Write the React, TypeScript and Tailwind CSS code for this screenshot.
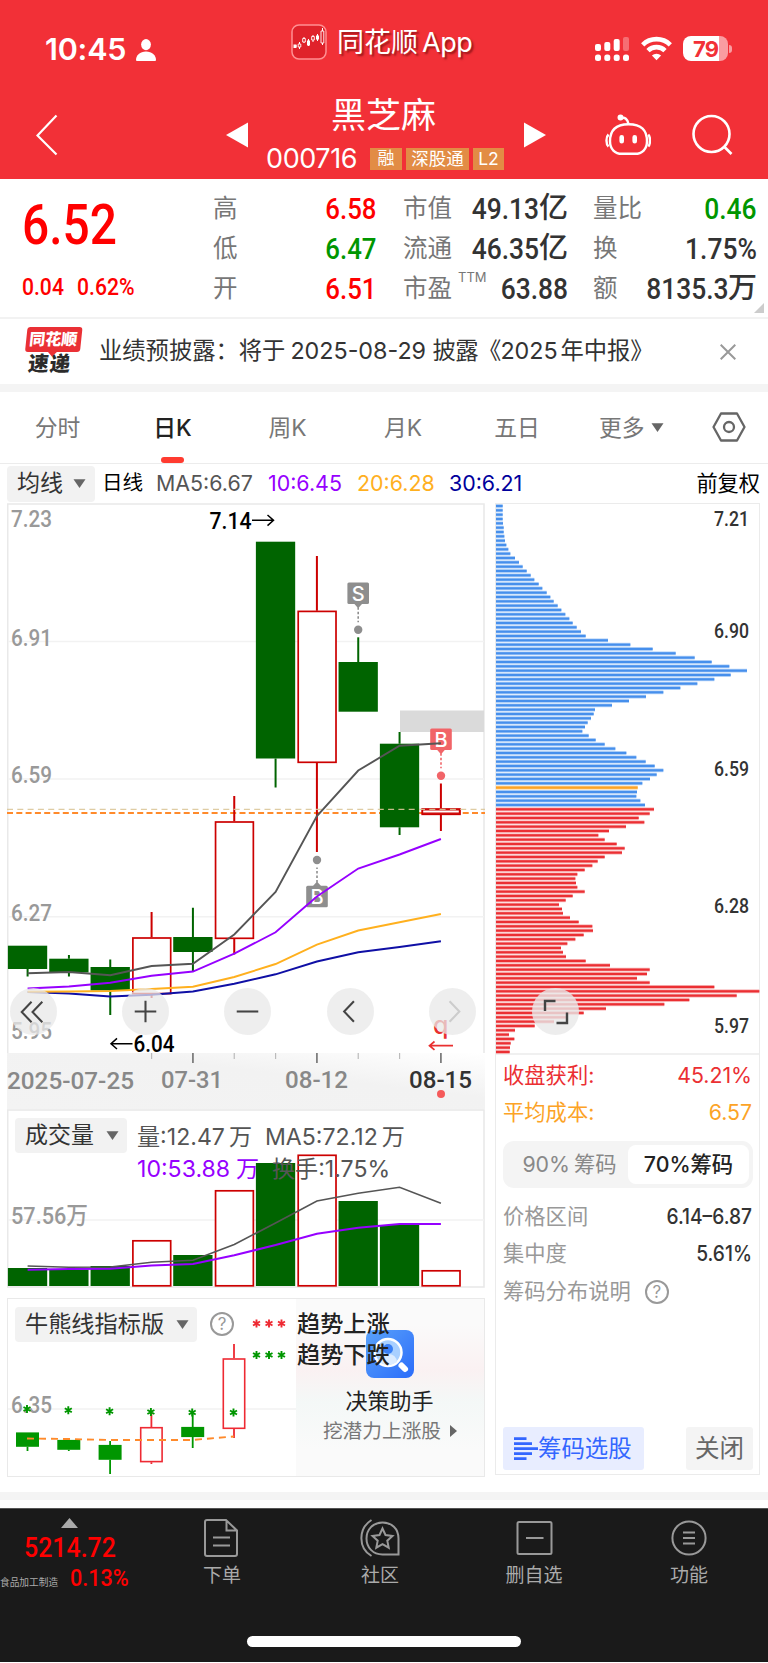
import type { ReactNode } from 'react';
import { clsx } from 'clsx';

const GREEN = '#006400';
const RED = '#cc0000';
const PITCH = 41.33;
const cx = (i: number) => 27.6 + i * PITCH;

type Candle = { up?: boolean; top: number; bottom: number; high: number; low: number };

const candles: Candle[] = [
    { top: 945.7, bottom: 969, high: 945.7, low: 976.5 },
    { top: 958.7, bottom: 972.5, high: 955, low: 976.5 },
    { top: 967, bottom: 990.5, high: 959.5, low: 1015 },
    { up: true, top: 937.3, bottom: 994.3, high: 912, low: 998 },
    { top: 937, bottom: 952, high: 907.7, low: 971 },
    { up: true, top: 821.3, bottom: 939, high: 796, low: 954.5 },
    { top: 541.7, bottom: 758.5, high: 541.7, low: 787.5 },
    { up: true, top: 610.7, bottom: 763, high: 556, low: 852 },
    { top: 662, bottom: 711.7, high: 637.3, low: 711.7 },
    { top: 743.7, bottom: 827.3, high: 732, low: 835 },
    { up: true, top: 808.3, bottom: 815, high: 783.5, low: 831 },
];

const averages = [
    { color: '#0f0fa5', ys: [992, 993.5, 996.5, 994.8, 991.5, 983.7, 974.3, 961.5, 952.3, 947, 941.3] },
    { color: '#ffb01e', ys: [991.7, 991.5, 991, 989, 986.7, 977, 964, 944.7, 930.5, 922.3, 914] },
    { color: '#9600ff', ys: [988.5, 986.5, 982.7, 975.7, 971.5, 953.7, 932.3, 896.5, 868.5, 854.5, 839] },
    { color: '#555', ys: [973.2, 972, 975.2, 966, 963.7, 934.5, 892, 816, 770.5, 745.8, 743.3] },
];

const volumes = [1268, 1269.5, 1266, 1240, 1255, 1190, 1163, 1154.5, 1201, 1225, 1270];
const volMa5 = [1266, 1267.3, 1267, 1262.3, 1260.3, 1244.5, 1223, 1201, 1193.3, 1187.3, 1203.3];
const volMa10 = [1269.7, 1269, 1268.7, 1265.5, 1264, 1255.3, 1245, 1233.7, 1227.7, 1224, 1224];

// chip distribution, one bar per price step from high to low
const chipsAbove = [
    38, 38, 38, 38, 39, 41, 41, 43, 45, 49, 55, 61, 75, 87, 98, 110, 122, 133, 146, 157, 170, 181, 191, 203, 214, 226,
    238, 248, 260, 273, 287, 354, 421, 488, 557, 614, 665, 718, 771, 722, 673, 622, 571, 520, 468, 417, 366, 315, 311,
    303, 293, 285, 277, 296, 317, 344, 376, 409, 439, 467, 494, 520, 500, 480, 457, 443, 441, 439, 451, 465,
];
const chipsBelow = [
    492, 479, 446, 463, 408, 357, 325, 344, 380, 404, 396, 344, 323, 307, 284, 262, 256, 258, 262, 284, 248, 227, 207,
    216, 219, 240, 266, 307, 309, 281, 256, 232, 213, 219, 228, 287, 360, 479, 471, 441, 479, 673, 808, 740, 598, 523,
    348, 281, 230, 192, 134, 75, 57, 73, 62, 60, 59,
];
const AVG_COST_INDEX = 65;

const toPoints = (ys: number[]) => ys.map((y, i) => `${cx(i)},${y}`).join(' ');

type LabelProps = { x: number; y: number; w: number; size?: number; fill?: string; weight?: number; children: ReactNode };

const Label = ({ x, y, w, size = 24, fill = '#999', weight = 500, children }: LabelProps) => (
    <text
        x={x}
        y={y}
        textLength={w}
        lengthAdjust="spacingAndGlyphs"
        fontSize={size}
        fontWeight={weight}
        fill={fill}
        fontFamily='Roboto, "Noto Sans CJK SC", sans-serif'
    >
        {children}
    </text>
);

const Caret = ({ className }: { className?: string }) => (
    <svg width="13" height="9" viewBox="0 0 13 9" className={className}>
        <path d="M.5 .3h12L6.5 9z" fill="currentColor" />
    </svg>
);

const Help = ({ className }: { className?: string }) => (
    <span
        className={clsx(
            'flex h-6 w-6 items-center justify-center rounded-full border-2 border-[#999] text-[17px] leading-none text-[#999]',
            className,
        )}
    >
        ?
    </span>
);

const StatusBar = () => (
    <div className="flex h-[88px] text-white">
        <div className="flex w-[291px] gap-[10px] pt-[33px] pl-[45px]">
            <span className="text-[30.500px] leading-8 font-semibold tracking-[-0.200px]">10:45</span>
            <svg width="20" height="22" viewBox="0 0 20 22" className="mt-[6px]" fill="#fff">
                <ellipse cx="10" cy="5.6" rx="4.9" ry="5.6" />
                <path d="M0 21c0-5 4-8.600 10-8.600S20 16 20 21q0 1-1 1H1q-1 0-1-1z" />
            </svg>
        </div>
        <div className="flex gap-[10px] pt-6">
            <svg width="36" height="36" viewBox="0 0 36 36">
                <rect x="1" y="1" width="34" height="34" rx="7" fill="#e0222b" stroke="#ff8f92" strokeWidth="1.500" />
                <path d="M3 22h3M8.500 18v7M13 13v6M17.500 15v7M22 11v7M26.500 10v7M31.500 4v17" stroke="#fff" strokeWidth="1" />
                <path d="M2.500 20.500h3v3.500h-3zM16 16.500h3v5h-3zM25 11.500h3v4h-3z" fill="#fff" />
                <path d="M7.200 20h2.600v3H7.200zM11.700 14.500h2.600V18h-2.600zM20.700 12.500h2.600v3.500h-2.600zM30 7h2.800v12H30z" fill="#e0222b" stroke="#fff" strokeWidth=".9" />
            </svg>
            <span className="pt-[1px] text-[27px] leading-9 whitespace-nowrap [text-shadow:2px_2px_2px_rgba(80,0,0,.55)]">
                同花顺<span className="ml-[4px] tracking-[-0.5px]">App</span>
            </span>
        </div>
        <div className="ml-auto flex gap-[11px] pt-9 pr-[36px]">
            <svg width="35" height="26" viewBox="0 0 35 26" fill="#fff">
                <rect x="0" y="8" width="6" height="7" rx="2" />
                <rect x="9.300" y="6" width="6" height="9" rx="2" />
                <rect x="18.700" y="3" width="6" height="12" rx="2" />
                <rect x="28" y="1" width="6" height="14" rx="2" opacity=".3" />
                {[0, 9.3, 18.7, 28].map((x) => (
                    <rect key={x} x={x} y="18.500" width="6" height="6.500" rx="2.500" />
                ))}
            </svg>
            <svg width="31" height="25" viewBox="0 0 31 25" fill="none" stroke="#fff" strokeWidth="4.600">
                <path d="M1.700 8.800a19.500 19.500 0 0 1 27.600 0" />
                <path d="M7 14.700a12 12 0 0 1 17 0" />
                <path d="M15.500 24.300l-4.600-4.700a6.500 6.500 0 0 1 9.200 0z" fill="#fff" stroke="none" />
            </svg>
            <div className="flex h-[25px] items-center">
                <div className="flex h-[25px] w-[45px] items-center justify-center rounded-[8px] bg-[linear-gradient(90deg,#fff_80%,#f99da1_80%)] text-[22px] leading-none font-bold tracking-[-1px] text-[#f23037]">
                    79
                </div>
                <div className="ml-[1px] h-2 w-[3px] rounded-r-full bg-[#f99da1]" />
            </div>
        </div>
    </div>
);

const TitleBar = () => (
    <div className="flex h-[91px] text-white">
        <svg width="22" height="42" viewBox="0 0 22 42" className="mt-[26px] ml-[36px]" fill="none" stroke="#fff" strokeWidth="2.200">
            <path d="M20.500 1.500L1.500 21.500l19 19" />
        </svg>
        <svg width="22" height="26" viewBox="0 0 22 26" className="mt-[34px] ml-[168px]">
            <path d="M22 .5v25L0 13z" fill="#fff" />
        </svg>
        <div className="flex w-[276px] flex-col items-center">
            <div className="mt-[7px] mr-[5px] text-[35px] leading-[40px]">黑芝麻</div>
            <div className="mt-[12px] mr-[2px] flex items-center gap-[4px]">
                <span className="mr-[6px] w-[94px] text-[27px] leading-6 tracking-[-0.400px]">000716</span>
                <span className="h-[22px] w-[32px] bg-[#e28c45] text-center text-[17px] leading-[21px]">融</span>
                <span className="h-[22px] w-[63px] bg-[#e28c45] text-center text-[17.500px] leading-[21px]">深股通</span>
                <span className="h-[22px] w-[31px] bg-[#e28c45] text-center text-[17.500px] leading-[22px]">L2</span>
            </div>
        </div>
        <svg width="22" height="26" viewBox="0 0 22 26" className="mt-[34px]">
            <path d="M0 .5v25L22 13z" fill="#fff" />
        </svg>
        <svg width="46" height="44" viewBox="0 0 46 44" className="mt-[26px] ml-[59px]" fill="none" stroke="#fff" strokeWidth="2.400">
            <path d="M16 4q6-1.500 7.500 6" />
            <circle cx="15.500" cy="3.500" r="1.800" fill="#fff" />
            <path d="M23.500 10.300c-13 0-18.500 6-18.500 17 0 8 5 12.500 12 12.500h13c7 0 12-4.500 12-12.500 0-11-5.500-17-18.500-17z" />
            <path d="M3.500 20.500c-2.700 2.500-2.700 9.500 0 12M43.300 20.500c2.300 2.500 2.300 9.500 0 12" />
            <path d="M16.700 23.200v4M29.700 23.200v4" strokeWidth="4.600" strokeLinecap="round" />
        </svg>
        <svg width="42" height="42" viewBox="0 0 42 42" className="mt-[26px] ml-[41px]" fill="none" stroke="#fff" strokeWidth="2.600">
            <circle cx="19.500" cy="20" r="18" />
            <path d="M32 32.500l7.500 7.500" />
        </svg>
    </div>
);

const quoteColumns = [
    {
        box: 'w-[164px] ml-[213px]',
        rows: [['高', '6.58', '', 'text-[#f00]'], ['低', '6.47', '', 'text-[#009600]'], ['开', '6.51', '', 'text-[#f00]']],
    },
    {
        box: 'w-[165px] ml-[26px]',
        rows: [['市值', '49.13', '亿', 'text-[#333]'], ['流通', '46.35', '亿', 'text-[#333]'], ['市盈', '63.88', '', 'text-[#333]']],
    },
    {
        box: 'w-[164px] ml-[25px]',
        rows: [['量比', '0.46', '', 'text-[#009600]'], ['换', '1.75%', '', 'text-[#333]'], ['额', '8135.3', '万', 'text-[#333]']],
    },
];

const Quote = () => (
    <section className="relative flex h-[140px] border-b-2 border-[#f2f2f2] pt-[9px]">
        <div className="absolute top-0 left-0 font-[Roboto] text-[#f00]">
            <div className="mt-[18px] ml-[22px] origin-left scale-x-[0.87] text-[55px] leading-[56px] font-medium">6.52</div>
            <div className="mt-[22px] ml-[22px] flex origin-left scale-x-[0.88] gap-[15px] text-[24px] leading-6 font-medium">
                <span>0.04</span>
                <span>0.62%</span>
            </div>
        </div>
        {quoteColumns.map((col) => (
            <div key={col.box} className={col.box}>
                {col.rows.map(([name, value, unit, color]) => (
                    <div key={name} className="flex h-10 items-center justify-between whitespace-nowrap">
                        <span className="flex text-[24.500px] text-[#777]">
                            {name}
                            {name === '市盈' && <sup className="top-[1px] ml-[6px] text-[13px] leading-none">TTM</sup>}
                        </span>
                        <span className={clsx('flex items-center pt-[2px] text-[29px] leading-9 font-medium', color)}>
                            <span className={clsx('origin-right font-[Roboto]', col.box.includes('213') ? 'scale-x-[0.89]' : 'scale-x-[0.91]')}>
                                {value}
                            </span>
                            {unit && <span className="mb-[3px]">{unit}</span>}
                        </span>
                    </div>
                ))}
            </div>
        ))}
        <svg width="10" height="10" className="absolute right-1 bottom-[4px]">
            <path d="M10 0v10H0z" fill="#ccc" />
        </svg>
    </section>
);

const News = () => (
    <section className="flex h-[65px] items-center">
        <div className="ml-[22px] flex w-[60px] -skew-x-6 flex-col items-center">
            <div className="relative h-[25px] w-[55px] rounded-[3px] bg-[#ea3035] text-center text-[16px] leading-[24px] font-black text-white">
                同花顺
                <span className="absolute bottom-[-3px] left-[24px] h-[7px] w-[7px] rotate-45 bg-[#ea3035]" />
            </div>
            <div className="mr-[2px] text-[20.500px] leading-[24px] font-black tracking-[1px] text-[#2b2b2b]">速递</div>
        </div>
        <p className="ml-[17px] flex flex-1 text-[23.300px] whitespace-nowrap text-[#333]">
            <span>业绩预披露：将于</span>
            <span className="ml-[5px] w-[142px]">2025-08-29</span>
            <span className="w-[68px] tracking-[-0.500px]">披露《</span>
            <span className="w-[60px]">2025</span>
            <span>年中报》</span>
        </p>
        <svg width="16" height="16" viewBox="0 0 16 16" className="mr-[32px]" stroke="#999" strokeWidth="2">
            <path d="M.7.700l14.600 14.600M15.300.7L.7 15.300" />
        </svg>
    </section>
);

const tabs = [
    { label: '分时', box: 'w-[115px]' },
    { label: '日K', box: 'w-[115px]', active: true },
    { label: '周K', box: 'w-[115px]' },
    { label: '月K', box: 'w-[116px]' },
    { label: '五日', box: 'w-[112px]' },
];

const Tabs = () => (
    <nav className="flex h-[72px] border-b border-[#ececec] text-[22.800px] text-[#777]">
        {tabs.map((t) => (
            <div key={t.label} className={clsx('flex flex-col items-center justify-between pt-[20px]', t.box, t.active && 'font-medium text-[#222]')}>
                <span className="leading-8">{t.label}</span>
                {t.active && <span className="mr-[1px] h-[6px] w-[23px] rounded-[3px] bg-[#ff3b30]" />}
            </div>
        ))}
        <div className="ml-[26px] flex gap-[6px] pt-[20px]">
            <span className="leading-8">更多</span>
            <Caret className="mt-[11px] text-[#666]" />
        </div>
        <svg width="34" height="30" viewBox="0 0 34 30" className="mt-[20px] ml-[48px]" fill="none" stroke="#666" strokeWidth="2.300">
            <path d="M9 1.500h16L32.500 15 25 28.500H9L1.500 15z" strokeLinejoin="round" />
            <circle cx="17" cy="15" r="5" />
        </svg>
    </nav>
);

const MaBar = () => (
    <div className="flex h-[39px] items-center text-[21.400px] whitespace-nowrap">
        <div className="ml-[7px] flex h-[36px] w-[88px] items-center gap-[10px] rounded-[4px] bg-[#f2f2f2] pl-[10px] text-[23px] text-[#333]">
            均线
            <Caret className="text-[#666]" />
        </div>
        <span className="ml-[7px] w-[54px] text-[20.600px] text-black">日线</span>
        <span className="w-[112px] text-[#555]">MA5:6.67</span>
        <span className="w-[89px] text-[#9600ff]">10:6.45</span>
        <span className="w-[92px] text-[#ffb01e]">20:6.28</span>
        <span className="text-[#00009c]">30:6.21</span>
        <span className="mr-[8px] ml-auto text-[21.200px] text-black">前复权</span>
    </div>
);

type MarkProps = { x: number; y: number; letter: string; color: string; down?: boolean };

// trade marker: lettered badge joined to its dot by a dotted line
const Mark = ({ x, y, letter, color, down }: MarkProps) => {
    const dir = down ? -1 : 1;
    return (
        <g>
            <rect x={x - 10.8} y={y - 10.8} width="21.600" height="21.600" rx="1.500" fill={color} />
            <path d={`M${x - 4} ${y + dir * 10.5}h8l-4 ${dir * 4.5}z`} fill={color} />
            <line x1={x} x2={x} y1={y + dir * 14} y2={y + dir * 29} stroke={color} strokeWidth="1.600" strokeDasharray="2.500 2" />
            <circle cx={x} cy={y + dir * 36.500} r="4.200" fill={color} />
            <text x={x} y={y + 7.5} textAnchor="middle" fontSize="20" fontWeight="500" fill="#fff" fontFamily="Inter, sans-serif">
                {letter}
            </text>
        </g>
    );
};

const controls: { x: string; icon: string; faded?: boolean }[] = [
    { x: 'left-[3px]', icon: 'M22 14L12 24.500 22 35M33 14L23 24.500 33 35' },
    { x: 'left-[115px]', icon: 'M24 13v22M13 24h22' },
    { x: 'left-[217px]', icon: 'M13 24h22' },
    { x: 'left-[320px]', icon: 'M27.500 13.500L17.500 24l10 10.500' },
    { x: 'left-[422px]', icon: 'M21 13.500L31 24 21 34.500', faded: true },
];

const KLine = () => (
    <div className="relative h-[606px]">
        <svg width="479" height="606" viewBox="7 503 479 606" className="block">
            <defs>
                <linearGradient id="axis" x1="0" x2="1" y1="1" y2="0">
                    <stop offset="0" stopColor="#f3f3f3" />
                    <stop offset=".6" stopColor="#f2f2f2" />
                    <stop offset="1" stopColor="#fff" />
                </linearGradient>
            </defs>
            <rect x="7" y="1053" width="478" height="56" fill="url(#axis)" />
            <path d="M7.700 1053V504h476.300v549" fill="none" stroke="#e9e9e9" strokeWidth="1.600" />
            <path d="M8 641.500h476M8 779h476M8 916.700h476" stroke="#f2f2f2" strokeWidth="1.500" />
            <rect x="400" y="710.500" width="84" height="21.500" fill="#dadada" />
            <Label x={11} y={527} w={41}>7.23</Label>
            <Label x={11} y={645.500} w={41}>6.91</Label>
            <Label x={11} y={783} w={41}>6.59</Label>
            <Label x={11} y={920.500} w={41}>6.27</Label>
            <Label x={11} y={1038.500} w={41}>5.95</Label>
            <line x1="7" x2="485" y1="813" y2="813" stroke="#ff8a2b" strokeWidth="2" strokeDasharray="6 3.300" />
            {candles.map((c, i) => {
                const color = c.up ? RED : GREEN;
                return (
                    <g key={i}>
                        <path d={`M${cx(i)} ${c.high}V${c.top}M${cx(i)} ${c.bottom}V${c.low}`} stroke={color} strokeWidth="2" />
                        {c.up ? (
                            <rect x={cx(i) - 18.700} y={c.top + 0.7} width="37.800" height={c.bottom - c.top - 1.4} fill="#fff" stroke={color} strokeWidth="1.700" />
                        ) : (
                            <rect x={cx(i) - 19.700} y={c.top} width="39.300" height={c.bottom - c.top} fill={color} />
                        )}
                    </g>
                );
            })}
            <rect x="422.500" y="809.800" width="37" height="3.400" fill="#fff" stroke={RED} strokeWidth="1.400" />
            <line x1="7" x2="485" y1="809.300" y2="809.300" stroke="#dcc79a" strokeWidth="1.200" strokeDasharray="6 4.300" opacity=".9" />
            <Mark x={358.2} y={593.3} letter="S" color="#8e8e8e" />
            <Mark x={441} y={739.3} letter="B" color="#f16468" />
            <Mark x={317} y={896.5} letter="B" color="#8e8e8e" down />
            {averages.map((a) => (
                <polyline key={a.color} points={toPoints(a.ys)} fill="none" stroke={a.color} strokeWidth="1.900" />
            ))}
            <Label x={209.500} y={529} w={42} fill="#000">7.14</Label>
            <path d="M252 520.300h21.500M267.500 515l6 5.300-6 5.300" fill="none" stroke="#000" strokeWidth="1.500" />
            <Label x={133.500} y={1052.300} w={41} fill="#000">6.04</Label>
            <path d="M132.500 1043.700H111M117 1038.400l-6 5.300 6 5.300" fill="none" stroke="#000" strokeWidth="1.500" />
            <text x="433" y="1033.500" fontSize="25" fontWeight="500" fill="#e93030" fontFamily="Inter, sans-serif">q</text>
            <path d="M453 1045.700h-23M434.500 1041.500l-5 4.200 5 4.200" fill="none" stroke="#e93030" strokeWidth="1.700" />
            {candles.map((_, i) => {
                if (i < 3) return null;
                const major = i === 4 || i === 7 || i === 10;
                return <path key={i} d={`M${cx(i)} 1053v${major ? 10 : 6}`} stroke={major ? '#777' : '#bbb'} strokeWidth={major ? 1.700 : 1.200} />;
            })}
            <Label x={7} y={1088.500} w={127} fill="#888">2025-07-25</Label>
            <Label x={161} y={1088} w={62} fill="#888">07-31</Label>
            <Label x={285} y={1088} w={63} fill="#888">08-12</Label>
            <Label x={409} y={1088} w={63} fill="#333">08-15</Label>
            <circle cx="441" cy="1094" r="4" fill="#f55a5a" />
        </svg>
        {controls.map((c) => (
            <button key={c.x} className={clsx('absolute top-[485px] h-[47px] w-[47px] rounded-full bg-[#e8e8e8]/75', c.x)}>
                <svg width="47" height="47" viewBox="0 0 48 48" fill="none" stroke={c.faded ? '#ccc' : '#444'} strokeWidth="2.100">
                    <path d={c.icon} />
                </svg>
            </button>
        ))}
    </div>
);

const Volume = () => (
    <div className="relative h-[179px]">
        <svg width="479" height="179" viewBox="7 1109 479 179" className="block">
            <rect x="7.700" y="1110" width="476.300" height="177" fill="none" stroke="#e9e9e9" strokeWidth="1.600" />
            <path d="M8 1220h476" stroke="#f2f2f2" strokeWidth="1.500" />
            <Label x={11} y={1223.500} w={77}>57.56万</Label>
            {volumes.map((y, i) =>
                candles[i].up ? (
                    <rect key={i} x={cx(i) - 18.700} y={y + 0.8} width="37.800" height={1285 - y} fill="#fff" stroke={RED} strokeWidth="1.700" />
                ) : (
                    <rect key={i} x={cx(i) - 19.700} y={y} width="39.300" height={1286 - y} fill={GREEN} />
                ),
            )}
            <polyline points={toPoints(volMa5)} fill="none" stroke="#555" strokeWidth="1.600" />
            <polyline points={toPoints(volMa10)} fill="none" stroke="#9600ff" strokeWidth="2" />
        </svg>
        <div className="absolute top-[9px] left-[8px] flex whitespace-nowrap">
            <div className="flex h-[35px] w-[112px] items-center gap-[12px] rounded-[4px] bg-[#f2f2f2] pl-[10px] text-[23px] text-[#333]">
                成交量
                <Caret className="text-[#666]" />
            </div>
            <div className="ml-[10px] pt-[3px] text-[23.100px] leading-[32px] text-[#555]">
                <div className="flex">
                    <span className="w-[128px]">量:12.47<span className="ml-[4px]">万</span></span>
                    <span>MA5:72.12<span className="ml-[4px]">万</span></span>
                </div>
                <div className="flex">
                    <span className="w-[135px] text-[#9600ff]">10:53.88<span className="ml-[6px]">万</span></span>
                    <span>换手:1.75%</span>
                </div>
            </div>
        </div>
    </div>
);

const bullBear = [
    { top: 1432.5, bottom: 1446.700, high: 1432.5, low: 1451, star: 1409 },
    { top: 1440, bottom: 1449.700, high: 1440, low: 1451, star: 1410.3 },
    { top: 1445, bottom: 1459.700, high: 1441, low: 1474, star: 1411.3 },
    { up: true, top: 1427, bottom: 1462.300, high: 1412, low: 1464, star: 1412 },
    { top: 1427, bottom: 1437, high: 1412, low: 1448, star: 1412.5 },
    { up: true, top: 1358.300, bottom: 1429, high: 1344, low: 1438, star: 1412.5 },
];

const Star = ({ x, y, color }: { x: number; y: number; color: string }) => (
    <path
        d={`M${x} ${y - 4}v8M${x - 3.5} ${y - 2}l7 4M${x + 3.5} ${y - 2}l-7 4`}
        stroke={color}
        strokeWidth="1.900"
    />
);

const BullBear = () => (
    <div className="relative mt-[10px] h-[179px]">
        <svg width="479" height="179" viewBox="7 1298 479 179" className="block">
            <path d="M8 1409h288" stroke="#f2f2f2" strokeWidth="1.500" />
            <Label x={11} y={1412.500} w={41}>6.35</Label>
            {bullBear.map((c, i) => {
                const x = 27.5 + i * 41.3;
                const color = c.up ? '#ee2a33' : '#009600';
                return (
                    <g key={i}>
                        <path d={`M${x} ${c.high}V${c.top}M${x} ${c.bottom}V${c.low}`} stroke={color} strokeWidth="1.800" />
                        <rect
                            x={x - 10.7}
                            y={c.top + 0.7}
                            width="21.400"
                            height={c.bottom - c.top - 1.400}
                            fill={c.up ? '#fff' : color}
                            stroke={color}
                            strokeWidth="1.600"
                        />
                        <Star x={x - 0.5} y={c.star} color="#009600" />
                    </g>
                );
            })}
            <polyline points="27,1438.500 68,1439 110,1440 151,1440 192,1440 210,1438.500 234,1436.500" fill="none" stroke="#ff8a2b" strokeWidth="1.900" strokeDasharray="7 5" />
            {[256.5, 269, 281.5].map((x) => (
                <g key={x}>
                    <Star x={x} y={1323.5} color="#ee2a33" />
                    <Star x={x} y={1355} color="#009600" />
                </g>
            ))}
        </svg>
        <div className="absolute inset-y-0 right-[1px] left-[289px] flex flex-col items-center bg-[linear-gradient(180deg,#fafafa_15%,#faf1f2_40%,#f4f8f7_58%,#fafafa_85%)]">
            <svg width="48" height="48" viewBox="0 0 48 48" className="mt-[32px] mr-[1px]">
                <defs>
                    <linearGradient id="assistant" x1="0" x2="1" y1="0" y2="1">
                        <stop offset="0" stopColor="#5aa2fa" />
                        <stop offset="1" stopColor="#2b6cfa" />
                    </linearGradient>
                </defs>
                <rect width="48" height="48" rx="8" fill="url(#assistant)" />
                <circle cx="22" cy="22.500" r="13.500" fill="#a9d0ff" stroke="#fff" strokeWidth="2.500" />
                <circle cx="22" cy="19" r="5" fill="#3a80f5" />
                <path d="M13 32q1-8 9-8t9 8q-9 6-18 0z" fill="#dcecff" />
                <path d="M35.500 35.500l3.500 3.500" stroke="#fff" strokeWidth="6" strokeLinecap="round" />
            </svg>
            <div className="mt-[9px] mr-[2px] text-[22px] leading-7 text-[#222]">决策助手</div>
            <div className="mt-[2px] mr-[1px] flex items-center gap-[9px] text-[19.700px] leading-7 text-[#777]">
                挖潜力上涨股
                <svg width="7" height="12">
                    <path d="M0 0v12l7-6z" fill="#666" />
                </svg>
            </div>
        </div>
        <div className="absolute inset-y-0 right-[1px] left-0 border-[1.500px] border-[#e9e9e9]" />
        <div className="absolute top-[9px] left-[8px] flex text-[23.200px] whitespace-nowrap text-[#333]">
            <div className="flex h-[35px] w-[182px] items-center gap-[12px] rounded-[4px] bg-[#f2f2f2] pl-[10px]">
                牛熊线指标版
                <Caret className="text-[#666]" />
            </div>
            <Help className="mt-[5px] ml-[13px]" />
            <div className="mt-[1.500px] ml-[63px] leading-[31.500px] font-medium text-[#222]">
                <div>趋势上涨</div>
                <div>趋势下跌</div>
            </div>
        </div>
    </div>
);

const Chips = () => (
    <div className="flex h-[972px] w-[265px] flex-col border border-[#ebebeb]">
        <div className="relative h-[551px] border-b-2 border-[#f0f0f0]">
            <svg width="264" height="550" viewBox="496 504 264 550" className="block">
                {[...chipsAbove, ...chipsBelow].map((edge, i) => {
                    const below = i >= chipsAbove.length;
                    const fill = i === AVG_COST_INDEX ? '#fca326' : below ? '#eb2f33' : '#468fec';
                    const soft = i === AVG_COST_INDEX ? '#fdd08f' : below ? '#f7b2b3' : '#b3d2f8';
                    const y = 506 + i * 4.333;
                    const w = (edge - 18) / 3;
                    return (
                        <g key={i}>
                            <rect x="496" y={y - 1.9} width={w} height="3.800" fill={soft} />
                            <rect x="496" y={y - 1.100} width={w} height="2.200" fill={fill} />
                        </g>
                    );
                })}
                <Label x={714} y={526} w={35} size={20} fill="#333">7.21</Label>
                <Label x={714} y={637.700} w={35} size={20} fill="#333">6.90</Label>
                <Label x={714} y={775.500} w={35} size={20} fill="#333">6.59</Label>
                <Label x={714} y={913.300} w={35} size={20} fill="#333">6.28</Label>
                <Label x={714} y={1033.300} w={35} size={20} fill="#333">5.97</Label>
            </svg>
            <button className="absolute top-[484px] left-[36px] h-[47px] w-[47px] rounded-full bg-[#e8e8e8]/80">
                <svg width="47" height="47" viewBox="0 0 47 47" fill="none" stroke="#444" strokeWidth="2.400">
                    <path d="M13 23V13h10.500M24.500 35H35V24.500" />
                </svg>
            </button>
        </div>
        <div className="flex flex-1 flex-col pr-[7px] pl-[7px] text-[21.300px] whitespace-nowrap">
            <div className="mt-[2px] flex h-[37px] items-center justify-between text-[#eb2f33]">
                <span>收盘获利:</span>
                <span>45.21%</span>
            </div>
            <div className="flex h-[37px] items-center justify-between text-[#fca326]">
                <span>平均成本:</span>
                <span>6.57</span>
            </div>
            <div className="mt-[10px] flex h-[47px] w-[250px] rounded-[11px] bg-[#f4f4f4] p-1 text-center leading-[39px]">
                <span className="w-[121px] pl-[4px] text-[#888]">90%<span className="ml-[4px]">筹码</span></span>
                <span className="h-[39px] flex-1 rounded-[8px] bg-white font-medium text-[#222]">70%筹码</span>
            </div>
            <div className="mt-[10px] flex h-[37px] items-center justify-between text-[#999]">
                <span>价格区间</span>
                <span className="origin-right scale-x-[0.9] font-medium text-[#333]">6.14–6.87</span>
            </div>
            <div className="flex h-[37px] items-center justify-between text-[#999]">
                <span>集中度</span>
                <span className="origin-right scale-x-[0.9] font-medium text-[#333]">5.61%</span>
            </div>
            <div className="flex h-[40px] items-center gap-[14px] text-[#999]">
                筹码分布说明
                <Help />
            </div>
            <div className="mt-auto mb-[4px] flex h-[43px] items-center justify-between">
                <div className="flex h-full w-[141px] items-center rounded-[3px] bg-[#e8edff] pl-[11px] text-[23.400px] text-[#3366ff]">
                    <svg width="24" height="24" viewBox="0 0 24 24" stroke="#3366ff" strokeWidth="2.700">
                        <path d="M0 1.700h12.500M0 6.700h18M0 11.700h24M0 16.700h18M0 21.700h12.500" />
                    </svg>
                    <span className="pt-[1px]">筹码选股</span>
                </div>
                <div className="mr-[-1px] flex h-full w-[67px] items-center justify-center rounded-[3px] bg-[#f4f4f4] text-[24.500px] text-[#666]">关闭</div>
            </div>
        </div>
    </div>
);

const actions = [
    {
        label: '下单',
        box: 'ml-[39px]',
        icon: <path d="M23 1H4Q2 1 2 3v32q0 2 2 2h28q2 0 2-2V11.500zM23.500 1v10.500H34M10 18.500h17M10 26.500h17" />,
    },
    {
        label: '社区',
        box: 'ml-[80px]',
        icon: (
            <>
                <path d="M37.500 35.500V19.500C37.500 9.500 30.500 3.500 21.500 3.500c-9.500 0-16 7-16 16s6.500 16 16 16z" />
                <path d="M10.500 1C-3 9.500-3 29 10.500 37" />
                <path d="M21.500 9.500l3 6.500 7 .9-5.200 4.800 1.400 7-6.200-3.500-6.200 3.500 1.400-7-5.200-4.800 7-.9z" />
            </>
        ),
    },
    {
        label: '删自选',
        box: 'ml-[76px]',
        icon: <path d="M4 3h31q1.500 0 1.500 1.500v29q0 1.500-1.500 1.500H4q-1.500 0-1.500-1.500v-29Q2.500 3 4 3zM11 19h17.500" />,
    },
    {
        label: '功能',
        box: 'ml-[77px]',
        icon: (
            <>
                <circle cx="19" cy="19" r="16.600" />
                <path d="M13 13.500h12M13 19h12M13 24.500h12" />
            </>
        ),
    },
];

const BottomBar = () => (
    <footer className="flex h-[154px] flex-col border-t border-[#555] bg-[#1a1a1a]">
        <div className="flex">
            <div className="w-[144px] font-[Roboto] text-[#f00]">
                <svg width="17" height="10" className="mt-[9px] ml-[61px]">
                    <path d="M8.500 0L17 10H0z" fill="#aaa" />
                </svg>
                <div className="mt-[6px] ml-[24px] origin-left scale-x-[0.89] text-[28px] leading-[28px] font-medium">5214.72</div>
                <div className="mt-[4px] flex h-[24px]">
                    <span className="mt-[3px] w-[70px] font-['Noto_Sans_CJK_SC'] text-[9.700px] leading-[26px] whitespace-nowrap text-[#aaa]">食品加工制造</span>
                    <span className="origin-left scale-x-[0.9] text-[24px] leading-6 font-medium">0.13%</span>
                </div>
            </div>
            {actions.map((a) => (
                <div key={a.label} className={clsx('flex w-[78px] flex-col items-center text-[19px] text-[#aaa]', a.box)}>
                    <svg width="40" height="38" viewBox="0 0 38 38" className="mt-[10px] overflow-visible" fill="none" stroke="#999" strokeWidth="2">
                        {a.icon}
                    </svg>
                    <span className="mt-[5px] leading-7">{a.label}</span>
                </div>
            ))}
        </div>
        <div className="mx-auto mt-auto mb-[15px] h-[11px] w-[274px] rounded-full bg-white" />
    </footer>
);

export default function App() {
    return (
        <div className="h-[1663px] w-[768px] overflow-hidden bg-white font-[Inter,'Noto_Sans_CJK_SC',sans-serif]">
            <header className="h-[179px] bg-[#f23037]">
                <StatusBar />
                <TitleBar />
            </header>
            <Quote />
            <News />
            <div className="h-2 bg-[#f4f4f4]" />
            <Tabs />
            <MaBar />
            <main className="flex h-[989px] justify-between pr-[8px] pl-[7px]">
                <div className="w-[479px]">
                    <KLine />
                    <Volume />
                    <BullBear />
                </div>
                <Chips />
            </main>
            <div className="mb-2 h-2 bg-[#f4f4f4]" />
            <BottomBar />
        </div>
    );
}
